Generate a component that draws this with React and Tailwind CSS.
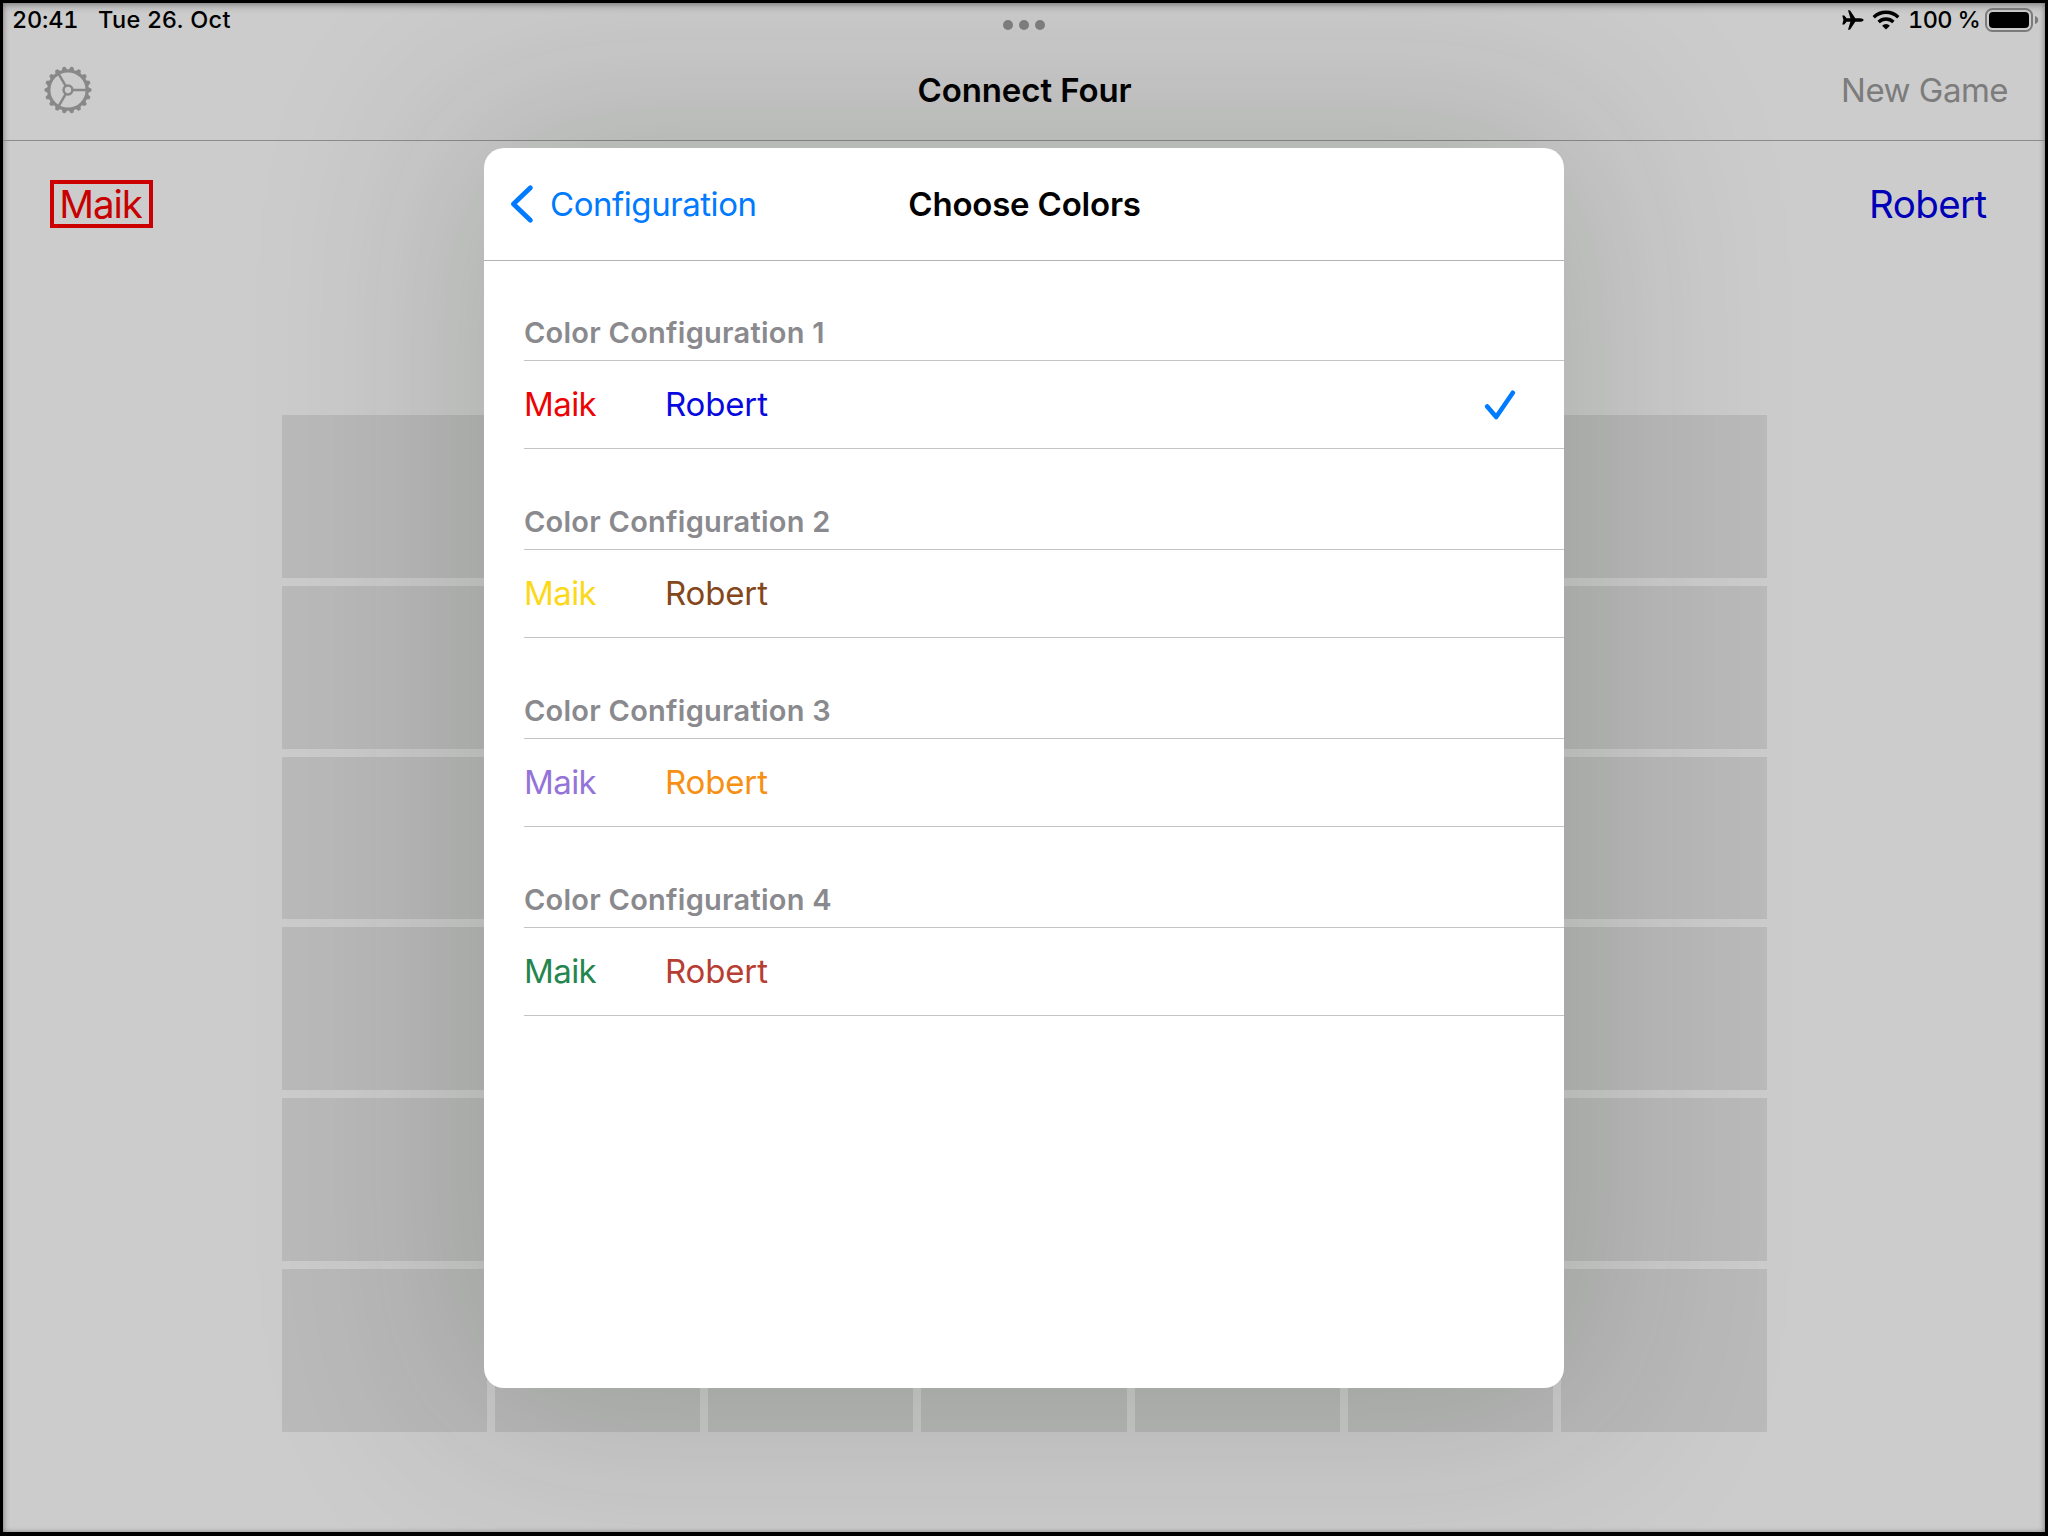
const CONFIGURATIONS = [
  { id: 1, first: 'text-[#ec0404]', second: 'text-[#0808e0]', selected: true },
  { id: 2, first: 'text-[#fbd91a]', second: 'text-[#83471b]' },
  { id: 3, first: 'text-[#9474d8]', second: 'text-[#f78f14]' },
  { id: 4, first: 'text-[#24864e]', second: 'text-[#b73e33]' },
];

const TEETH = Array.from({ length: 18 }, (_, i) => i * 20);

function GearIcon() {
  return (
    <svg className="h-12 w-12 text-[#888888]" viewBox="-24 -24 48 48" fill="none" stroke="currentColor">
      <circle r="19.2" strokeWidth="3.2" />
      <circle r="4.4" strokeWidth="2.5" />
      {[0, 120, 240].map((a) => (
        <path key={a} d="M5 0H19" strokeWidth="2.5" transform={`rotate(${a})`} />
      ))}
      {TEETH.map((a) => (
        <path key={a} d="M20 -2.8L23.2 -1.5Q23.9 0 23.2 1.5L20 2.8Z" fill="currentColor" stroke="none" transform={`rotate(${a})`} />
      ))}
    </svg>
  );
}

function AirplaneIcon() {
  return (
    <svg className="h-5 w-[22px]" viewBox="0 0 22 20" fill="currentColor">
      <path d="M21.6 10C21.6 11 19.7 11.8 18 11.8H13.3L8.3 19.3Q8 19.7 7.5 19.7H6L8.4 11.8H4.6L2.4 14.6H.3L1.4 10L.3 5.4H2.4L4.6 8.2H8.4L6 .3H7.5Q8 .3 8.3 .7L13.3 8.2H18C19.7 8.2 21.6 9 21.6 10Z" />
    </svg>
  );
}

function WifiIcon() {
  return (
    <svg className="h-5 w-7" viewBox="0 0 28 20" fill="none" stroke="currentColor" strokeWidth="3.3">
      <path d="M1.7 7.2A17.7 17.7 0 0 1 26.3 7.2" />
      <path d="M6.6 12A10.6 10.6 0 0 1 21.4 12" />
      <path d="M14 19.6L10.1 15.7A5.6 5.6 0 0 1 17.9 15.7Z" fill="currentColor" stroke="none" />
    </svg>
  );
}

function BatteryIcon() {
  return (
    <svg className="h-6 w-[54px]" viewBox="0 0 54 24" fill="none">
      <rect x="1" y="1" width="46" height="22" rx="6.5" stroke="#7b7b7b" strokeWidth="2" />
      <rect x="4" y="4" width="40" height="16" rx="4" fill="#000" />
      <path d="M50 8Q53.2 9 53.2 12Q53.2 15 50 16Z" fill="#7b7b7b" />
    </svg>
  );
}

function StatusBar() {
  return (
    <div className="grid h-[33px] shrink-0 grid-cols-3 text-[23.5px] leading-[33px] font-medium text-black">
      <div className="flex pl-[9px] whitespace-nowrap">
        <span className="w-[86px] tracking-[-0.2px] tabular-nums">20:41</span>
        <span className="tracking-[0.34px]">Tue 26. Oct</span>
      </div>
      <div className="flex items-center justify-center gap-1.5 pt-[11px]">
        <span className="size-2.5 rounded-full bg-[#7f817f]" />
        <span className="size-2.5 rounded-full bg-[#7f817f]" />
        <span className="size-2.5 rounded-full bg-[#7f817f]" />
      </div>
      <div className="flex items-center justify-end pr-[6px]">
        <AirplaneIcon />
        <span className="ml-2 flex"><WifiIcon /></span>
        <span className="ml-2 w-[77px] tracking-[-0.6px] whitespace-nowrap tabular-nums">100 %</span>
        <span className="flex pt-[1px]"><BatteryIcon /></span>
      </div>
    </div>
  );
}

function NavBar() {
  return (
    <header className="grid h-[105px] shrink-0 grid-cols-3 items-center border-b border-[#8c8c8c] pt-[4px] text-[33px]">
      <div className="pl-[41px]"><GearIcon /></div>
      <h1 className="pt-[2px] pl-px text-center font-semibold tracking-[-0.1px] text-black">Connect Four</h1>
      <div className="pt-[2px] pr-[37px] text-right tracking-[-0.52px] text-[#7c7c7c]">New Game</div>
    </header>
  );
}

function Board() {
  return (
    <div className="mt-[148px] ml-[279px] grid h-[1017px] w-[1485px] grid-cols-[205px_205px_205px_206px_205px_205px_206px] grid-rows-6 gap-2">
      {Array.from({ length: 42 }, (_, i) => (
        <div key={i} className="bg-[#bababa]" />
      ))}
    </div>
  );
}

function Section({ id, first, second, selected }) {
  return (
    <section className="mb-[40px] pl-10">
      <h3 className="flex h-[60px] items-center pt-[5px] text-[29px] font-semibold tracking-[0.25px] text-[#8a8a8e]">
        <span>Color Configuration {id}</span>
      </h3>
      <div className="flex h-[89px] items-center border-y border-[#c4c4c6] text-[33px]">
        <span className={`w-[141px] tracking-[-0.6px] ${first}`}>Maik</span>
        <span className={`tracking-[-0.16px] ${second}`}>Robert</span>
        {selected && (
          <svg className="mr-[48px] ml-auto h-8 w-8" viewBox="0 0 32 32" fill="none" stroke="#007aff" strokeWidth="4.6" strokeLinecap="round" strokeLinejoin="round">
            <path d="M3.2 17.4L12.2 28L28.8 3.8" />
          </svg>
        )}
      </div>
    </section>
  );
}

function ColorDialog() {
  return (
    <div role="dialog" className="flex h-[1240px] w-[1080px] flex-col rounded-[20px] bg-white shadow-[0_0_200px_40px_rgba(5,28,0,0.15)]">
      <header className="grid h-[113px] shrink-0 grid-cols-3 items-center border-b border-[#b3b3b5] text-[33px]">
        <div className="flex items-center pl-[24px] text-[#007aff]">
          <svg className="h-10 w-[26px]" viewBox="0 0 26 40" fill="none" stroke="currentColor" strokeWidth="4.8" strokeLinecap="round" strokeLinejoin="round">
            <path d="M22.4 3.8L5.4 20L22.4 36.2" />
          </svg>
          <span className="ml-4 pt-px tracking-[-0.45px]">Configuration</span>
        </div>
        <h2 className="pt-px pl-px text-center font-semibold tracking-[-0.2px] text-black">Choose Colors</h2>
      </header>
      <div className="pt-[39px]">
        {CONFIGURATIONS.map((c) => (
          <Section key={c.id} {...c} />
        ))}
      </div>
    </div>
  );
}

export default function App() {
  return (
    <div className="relative h-[1536px] w-[2048px] overflow-hidden bg-black pt-[3px] pr-[3px] pb-[4px] pl-[3px] font-['Inter',sans-serif]">
      <div className="flex h-full flex-col bg-[#cccccc] shadow-[inset_0_4px_7px_rgba(0,0,0,0.2),inset_0_0_5px_rgba(0,0,0,0.3)]">
        <StatusBar />
        <NavBar />
        <div className="flex h-[126px] shrink-0 items-center justify-between pr-[58.5px] pl-[47px] text-[38.5px]">
          <span className="flex h-12 w-[103px] items-center justify-center border-4 border-[#cc0000] pt-px pr-[2px] tracking-[-1.04px] text-[#c80000]">Maik</span>
          <span className="pt-px tracking-[-0.6px] text-[#0000b8]">Robert</span>
        </div>
        <Board />
      </div>
      <div className="absolute inset-0 flex items-center justify-center">
        <ColorDialog />
      </div>
    </div>
  );
}
